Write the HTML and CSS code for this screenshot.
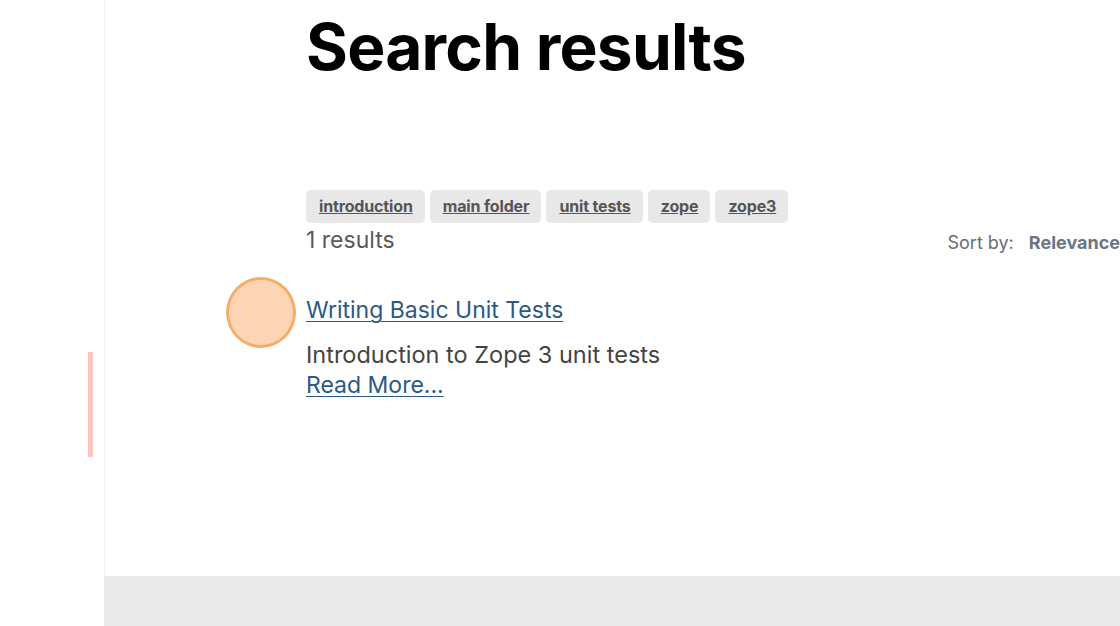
FILE: index.html
```html
<!DOCTYPE html>
<html lang="en">
<head>
<meta charset="utf-8">
<title>Search results</title>
<link rel="stylesheet" href="styles.css">
</head>
<body>
<div class="layout">
  <aside class="sidebar">
    <div class="scroll-mark"></div>
  </aside>
  <div class="main">
    <section class="content">
      <h1 class="title">Search results</h1>
      <div class="tags">
        <a class="tag" href="#">introduction</a>
        <a class="tag" href="#">main folder</a>
        <a class="tag" href="#">unit tests</a>
        <a class="tag" href="#">zope</a>
        <a class="tag" href="#">zope3</a>
      </div>
      <div class="results-bar">
        <span class="count">1 results</span>
        <span class="sort"><span class="sort-label">Sort by:</span><span class="sort-value">Relevance</span></span>
      </div>
      <article class="result">
        <span class="marker"></span>
        <a class="result-title" href="#">Writing Basic Unit Tests</a>
        <p class="result-desc">Introduction to Zope 3 unit tests</p>
        <a class="read-more" href="#">Read More...</a>
      </article>
    </section>
    <footer class="footer"></footer>
  </div>
</div>
</body>
</html>
```
FILE: styles.css
```css
html, body {
  margin: 0;
  padding: 0;
}
body {
  width: 1120px;
  height: 626px;
  overflow: hidden;
  background: #ffffff;
  font-family: Inter, "Noto Sans", sans-serif;
}
.layout {
  display: flex;
  height: 626px;
}
.sidebar {
  width: 104px;
  flex: none;
  padding-top: 352px;
  box-sizing: border-box;
}
.scroll-mark {
  width: 5px;
  height: 105px;
  margin-left: 88px;
  background: #fcc5c0;
}
.main {
  flex: 1;
  display: flex;
  flex-direction: column;
  min-width: 0;
}
.content {
  height: 576px;
  box-sizing: border-box;
  border-left: 1px solid #eef0f1;
  padding-left: 201px;
  width: 1016px;
}
.title {
  margin: 0;
  padding-top: 8px;
  font-size: 64px;
  line-height: 78px;
  font-weight: 700;
  letter-spacing: -0.75px;
  color: #000;
}
.tags {
  display: flex;
  gap: 5px;
  margin-top: 104px;
}
.tag {
  display: block;
  background: #e8e8e8;
  border-radius: 5px;
  padding: 0 12px 0 13px;
  height: 33px;
  line-height: 33px;
  font-size: 16px;
  font-weight: 700;
  letter-spacing: -0.15px;
  color: #555;
  text-decoration: underline;
}
.results-bar {
  display: flex;
  align-items: center;
  justify-content: space-between;
  height: 34px;
}
.count {
  font-size: 23px;
  font-weight: 400;
  color: #5a5a5a;
}
.sort {
  font-size: 18px;
  color: #666e78;
  margin-top: 4px;
  white-space: nowrap;
}
.sort-value {
  margin-left: 15px;
  font-weight: 700;
  color: #6b7584;
}
.result {
  position: relative;
  margin-top: 38px;
}
.marker {
  position: absolute;
  left: -80px;
  top: -18px;
  width: 64px;
  height: 65px;
  border-radius: 50%;
  background: #fed5b4;
  border: 3px solid #f6ad68;
}
.result-title {
  font-size: 23px;
  color: #2a5a85;
  text-decoration: underline;
  text-decoration-thickness: 1px;
  text-underline-offset: 3px;
  line-height: 30px;
}
.result-desc {
  margin: 15px 0 0;
  font-size: 23.5px;
  line-height: 30px;
  color: #444;
}
.read-more {
  display: inline-block;
  font-size: 23px;
  line-height: 30px;
  color: #2a5a85;
  text-decoration: underline;
  text-decoration-thickness: 1px;
  text-underline-offset: 3px;
}
.footer {
  height: 50px;
  background: #e9e9e9;
}
```
